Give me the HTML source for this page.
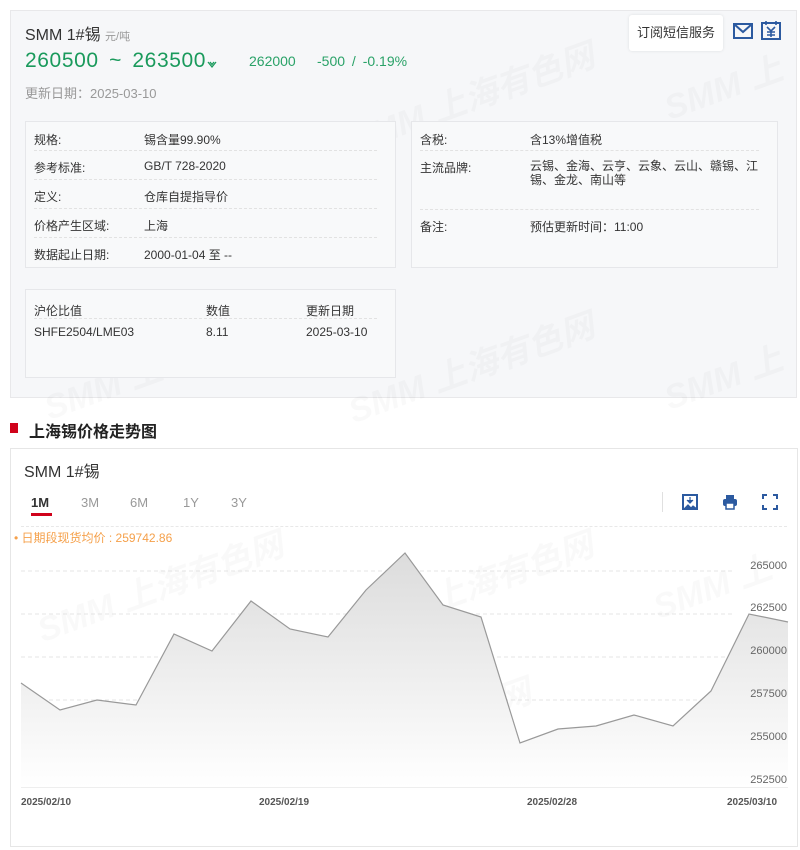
<!DOCTYPE html>
<html><head><meta charset="utf-8"><style>
*{margin:0;padding:0;box-sizing:border-box}
body{width:800px;height:850px;background:#fff;font-family:"Liberation Sans","Noto Sans CJK SC",sans-serif;position:relative;overflow:hidden;color:#333}
.abs{position:absolute}
.top{left:10px;top:10px;width:787px;height:388px;background:#f6f7f9;border:1px solid #e8e8ea}
.box{background:#f8f9fa;border:1px solid #e6e7ea}
.row{position:absolute;left:8px;right:18px;font-size:12px;color:#333;border-bottom:1px dashed #e2e2e2}
.row span{position:absolute;left:0}
.row b{font-weight:normal;position:absolute;left:110px}
.wm{position:absolute;font-size:34px;font-weight:bold;color:rgba(0,0,0,0.022);transform:rotate(-20deg);white-space:nowrap;font-style:italic}
.grid{stroke:#e4e4e4;stroke-dasharray:4 3}
</style></head><body>
<div class="abs top">
 <div class="wm" style="left:330px;top:60px">SMM 上海有色网</div>
 <div class="wm" style="left:650px;top:50px">SMM 上</div>
 <div class="wm" style="left:330px;top:330px">SMM 上海有色网</div>
 <div class="wm" style="left:650px;top:340px">SMM 上</div>
 <div class="wm" style="left:30px;top:350px">SMM 上</div>
 <div class="abs" style="left:14px;top:10px;font-size:16px;color:#333">SMM 1#锡 <span style="font-size:11px;color:#999">元/吨</span></div>
 <div class="abs" style="left:14px;top:38px;font-size:21px;color:#1a9a5c;letter-spacing:0.6px;word-spacing:4px">260500 ~ 263500</div>
 <svg class="abs" style="left:196px;top:50px" width="10" height="8" viewBox="0 0 10 8"><path d="M1 1l4 5 4-5M3 1l2 2.5 2-2.5" fill="none" stroke="#1a9a5c" stroke-width="1.3"/></svg>
 <div class="abs" style="left:238px;top:42px;font-size:14px;color:#2aa268">262000</div>
 <div class="abs" style="left:306px;top:42px;font-size:14px;color:#2aa268;word-spacing:3px">-500 / -0.19%</div>
 <div class="abs" style="left:14px;top:72px;font-size:13px;color:#999">更新日期：2025-03-10</div>
 <div class="abs" style="left:618px;top:4px;width:94px;height:36px;background:#fff;border-radius:3px;box-shadow:0 0 3px rgba(0,0,0,.1);font-size:13px;color:#333;line-height:36px;text-align:center">订阅短信服务</div>
 <svg class="abs" style="left:722px;top:12px" width="20" height="16" viewBox="0 0 20 16"><rect x="1" y="1" width="18" height="14" fill="none" stroke="#2c5aa0" stroke-width="2"/><path d="M1 1 L10 9 L19 1" fill="none" stroke="#2c5aa0" stroke-width="2"/></svg>
 <svg class="abs" style="left:750px;top:9px" width="20" height="20" viewBox="0 0 20 20"><rect x="1" y="3" width="18" height="16" fill="none" stroke="#2c5aa0" stroke-width="2"/><path d="M5 1v4M15 1v4M6 7l4 4 4-4M10 11v6M6 12h8M6 15h8" fill="none" stroke="#2c5aa0" stroke-width="1.6"/></svg>
 <div class="abs box" style="left:14px;top:110px;width:371px;height:147px">
  <div class="row" style="top:0;height:29px"><span style="top:9px">规格:</span><b style="top:9px">锡含量99.90%</b></div>
  <div class="row" style="top:29px;height:29px"><span style="top:8px">参考标准:</span><b style="top:8px">GB/T 728-2020</b></div>
  <div class="row" style="top:58px;height:29px"><span style="top:8px">定义:</span><b style="top:8px">仓库自提指导价</b></div>
  <div class="row" style="top:87px;height:29px"><span style="top:8px">价格产生区域:</span><b style="top:8px">上海</b></div>
  <div class="row" style="top:116px;height:29px;border:none"><span style="top:8px">数据起止日期:</span><b style="top:8px">2000-01-04 至 --</b></div>
 </div>
 <div class="abs box" style="left:400px;top:110px;width:367px;height:147px">
  <div class="row" style="top:0;height:29px"><span style="top:9px">含税:</span><b style="top:9px">含13%增值税</b></div>
  <div class="row" style="top:29px;height:59px"><span style="top:8px">主流品牌:</span><b style="top:8px;width:240px;line-height:14px">云锡、金海、云亨、云象、云山、赣锡、江锡、金龙、南山等</b></div>
  <div class="row" style="top:88px;height:29px;border:none"><span style="top:8px">备注:</span><b style="top:8px">预估更新时间：11:00</b></div>
 </div>
 <div class="abs box" style="left:14px;top:278px;width:371px;height:89px;font-size:12px">
  <div class="row" style="top:0;height:29px"><span style="top:12px">沪伦比值</span><b style="top:12px;left:172px">数值</b><b style="top:12px;left:272px">更新日期</b></div>
  <div class="abs" style="left:8px;top:35px">SHFE2504/LME03</div>
  <div class="abs" style="left:180px;top:35px">8.11</div>
  <div class="abs" style="left:280px;top:35px">2025-03-10</div>
 </div>
</div>
<div class="abs" style="left:10px;top:423px;width:8px;height:10px;background:#d0021b"></div>
<div class="abs" style="left:29px;top:418px;font-size:16px;font-weight:bold;color:#222">上海锡价格走势图</div>
<div class="abs" style="left:10px;top:448px;width:788px;height:399px;border:1px solid #e6e6e6"></div>
<div class="abs" style="left:24px;top:458px;font-size:16px;color:#333">SMM 1#锡</div>
<div class="abs" style="left:31px;top:495px;font-size:13px;color:#333;font-weight:bold">1M</div>
<div class="abs" style="left:31px;top:513px;width:21px;height:3px;background:#d0021b"></div>
<div class="abs" style="left:81px;top:495px;font-size:13px;color:#999">3M</div>
<div class="abs" style="left:130px;top:495px;font-size:13px;color:#999">6M</div>
<div class="abs" style="left:183px;top:495px;font-size:13px;color:#999">1Y</div>
<div class="abs" style="left:231px;top:495px;font-size:13px;color:#999">3Y</div>
<div class="abs" style="left:662px;top:492px;width:1px;height:20px;background:#e0e0e0"></div>
<svg class="abs" style="left:682px;top:494px" width="16" height="16" viewBox="0 0 16 16"><rect x="1" y="1" width="14" height="14" fill="none" stroke="#2c5aa0" stroke-width="2"/><path d="M8 3v6M5 6l3 3 3-3M2 15l4-4 3 3 2-2 4 3z" fill="#2c5aa0" stroke="#2c5aa0" stroke-width="1.2"/></svg>
<svg class="abs" style="left:722px;top:494px" width="16" height="16" viewBox="0 0 16 16"><rect x="4" y="1" width="8" height="4" fill="#2c5aa0"/><rect x="1" y="5" width="14" height="7" rx="2" fill="#2c5aa0"/><rect x="4" y="9" width="8" height="6" fill="#fff" stroke="#2c5aa0" stroke-width="1.5"/></svg>
<svg class="abs" style="left:762px;top:494px" width="16" height="16" viewBox="0 0 16 16"><path d="M1 5V1h4M11 1h4v4M15 11v4h-4M5 15H1v-4" fill="none" stroke="#2c5aa0" stroke-width="2"/></svg>
<div class="abs" style="left:21px;top:526px;width:766px;border-top:1px dashed #e8e8e8"></div>
<div class="abs" style="left:14px;top:529px;font-size:12px;color:#f5a04a">• 日期段现货均价 : 259742.86</div>
<div class="wm" style="left:30px;top:560px">SMM 上海有色网</div>
<div class="wm" style="left:340px;top:560px">SMM 上海有色网</div>
<div class="wm" style="left:650px;top:560px">SMM 上</div>
<div class="wm" style="left:430px;top:680px">有色网</div>
<svg class="abs" style="left:0;top:0" width="800" height="850">
<defs><linearGradient id="g" x1="0" y1="0" x2="0" y2="1"><stop offset="0" stop-color="#dcdcdc"/><stop offset="1" stop-color="#fff"/></linearGradient></defs>
<line class="grid" x1="21" x2="735" y1="571" y2="571"/><line class="grid" x1="21" x2="735" y1="614" y2="614"/><line class="grid" x1="21" x2="735" y1="657" y2="657"/><line class="grid" x1="21" x2="735" y1="700" y2="700"/><line class="grid" x1="21" x2="735" y1="743" y2="743"/>
<path d="M21 683L60 710L97 700L136 705L174 634L212 651L251 601L290 629L328 637L366 590L405 553L443 605L481 617L520 743L558 729L596 726L634 715L673 726L711 691L749 614L788 622L788 787L21 787Z" fill="url(#g)"/>
<path d="M21 683L60 710L97 700L136 705L174 634L212 651L251 601L290 629L328 637L366 590L405 553L443 605L481 617L520 743L558 729L596 726L634 715L673 726L711 691L749 614L788 622" fill="none" stroke="#999" stroke-width="1.2"/>
<line x1="21" x2="788" y1="787.5" y2="787.5" stroke="#eee"/>
<g font-size="11" fill="#666" text-anchor="end" font-family="Liberation Sans"><text x="787" y="569">265000</text><text x="787" y="611">262500</text><text x="787" y="654">260000</text><text x="787" y="697">257500</text><text x="787" y="740">255000</text><text x="787" y="783">252500</text></g>
<g font-size="10" fill="#555" font-weight="bold" font-family="Liberation Sans"><text x="21" y="805">2025/02/10</text><text x="259" y="805">2025/02/19</text><text x="527" y="805">2025/02/28</text><text x="727" y="805">2025/03/10</text></g>
</svg>
</body></html>
